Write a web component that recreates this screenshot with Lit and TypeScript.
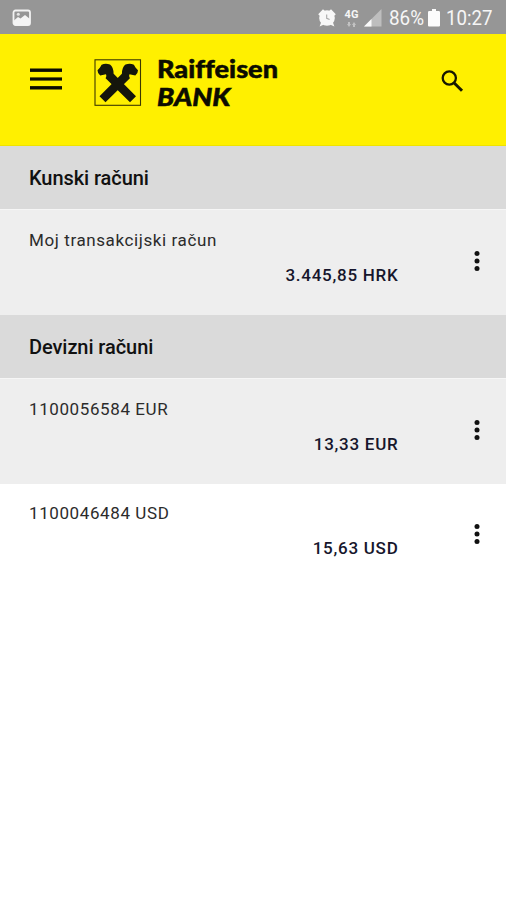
import { LitElement, html, css, svg } from "lit";
import { customElement, property } from "lit/decorators.js";

interface Account {
  name: string;
  amount: string;
}

interface Section {
  title: string;
  accounts: Account[];
}

const SECTIONS: Section[] = [
  { title: "Kunski računi", accounts: [{ name: "Moj transakcijski račun", amount: "3.445,85 HRK" }] },
  {
    title: "Devizni računi",
    accounts: [
      { name: "1100056584 EUR", amount: "13,33 EUR" },
      { name: "1100046484 USD", amount: "15,63 USD" },
    ],
  },
];

@customElement("status-bar")
class StatusBar extends LitElement {
  static styles = css`
    :host {
      display: flex;
      align-items: center;
      height: 34px;
      box-sizing: border-box;
      padding: 2px 13px 0 12px;
      background: #969696;
      color: #f6f6f6;
      font: 20px/32px Roboto, sans-serif;
      white-space: nowrap;
    }
    svg { display: block; flex: none; }
    .picture { margin-right: auto; }
    .net {
      display: flex;
      flex-direction: column;
      align-items: center;
      width: 15px;
      margin: 0 5px 0 8px;
      font: 700 11px/10px Roboto, sans-serif;
    }
    .arrows { margin-top: 2px; }
    .percent { width: 35px; margin: 0 4px 0 7px; }
    .time { width: 47px; margin-left: 6px; }
    .label { display: block; overflow: visible; }
  `;
  render() {
    return html`
      <svg class="picture" width="19" height="18" viewBox="0 0 19 18">
        <rect x="1.5" y="1.5" width="16.5" height="14.5" rx="2" fill="#969696" stroke="#f2f2f2" stroke-width="1.8" />
        <path d="M2 11.5L6 8 8.5 9.5 13 6 18 10V16H2Z" fill="#f4f4f4" />
        <circle cx="6.3" cy="5.3" r="1.5" fill="#e4e4e4" />
      </svg>
      <svg width="18" height="20" viewBox="0 0 18 20" fill="#f8f8f8">
        <circle cx="9" cy="10" r="7.8" />
        <path d="M.2 6.2L5 1.2 7.4 3.5 2.3 8.2ZM17.8 6.2L13 1.2 10.6 3.5 15.7 8.2ZM1.6 18.6L3.6 13 7.2 16ZM16.4 18.6L14.4 13 10.8 16Z" />
        <path d="M8.7 6.6V10.3L11.6 11.6" fill="none" stroke="#a8a8a8" stroke-width="1.1" />
      </svg>
      <div class="net">
        <span>4G</span>
        <svg class="arrows" width="9" height="5" viewBox="0 0 9 5" fill="#c2c2c2">
          <path d="M1 0H3V2H4L2 5 0 2H1ZM6 5H8V3H9L7 0 5 3H6Z" />
        </svg>
      </div>
      <svg width="18" height="18" viewBox="0 0 18 18">
        <path d="M0 17.5L17.5 0V17.5Z" fill="#bebebe" />
        <path d="M0 17.5L7.5 10V17.5Z" fill="#fafafa" />
      </svg>
      <svg class="label percent" width="35" height="20" fill="currentColor">
        <text x="0" y="17.4" textLength="35" lengthAdjust="spacingAndGlyphs">86%</text>
      </svg>
      <svg width="12" height="18" viewBox="0 0 12 18" fill="#fcfcfc">
        <path d="M4 0H8V2H10.8Q12 2 12 3.2V16.6Q12 17.6 11 17.6H1Q0 17.6 0 16.6V3.2Q0 2 1.2 2H4Z" />
      </svg>
      <svg class="label time" width="47" height="20" fill="currentColor">
        <text x="0" y="17.4" textLength="46.5" lengthAdjust="spacingAndGlyphs">10:27</text>
      </svg>
    `;
  }
}

@customElement("bank-header")
class BankHeader extends LitElement {
  static styles = css`
    :host {
      display: flex;
      align-items: flex-start;
      height: 112px;
      box-sizing: border-box;
      padding: 24px 42px 0 30px;
      background: #fff000;
      border-bottom: 1px solid #efe300;
    }
    svg { display: block; flex: none; }
    .menu { margin-top: 10px; }
    .emblem { margin-left: 32px; }
    .wordmark {
      margin-left: 13px;
      margin-right: auto;
      overflow: visible;
      font-family: "Lato", sans-serif;
      font-weight: 900;
      font-size: 24px;
      font-variant-ligatures: none;
      stroke: #0c0c00;
      stroke-width: 0.5;
    }
    .bank { font-style: italic; }
    .search { margin-top: 11px; }
  `;
  render() {
    return html`
      <svg class="menu" width="32" height="23" viewBox="0 0 32 23" fill="#0c0c00">
        <rect y="0.5" width="32" height="3.4" /><rect y="9.4" width="32" height="3.2" /><rect y="18.1" width="32" height="3.4" />
      </svg>
      <svg class="emblem" width="48" height="50" viewBox="0 0 48 50">
        <rect x="1" y="1.8" width="45.5" height="45.5" fill="none" stroke="#3c3900" stroke-width="1.1" />
        ${this.horse(false)}${this.horse(true)}
      </svg>
      <svg class="wordmark" width="130" height="56" fill="#0c0c00">
        <text x="2" y="20" textLength="121" lengthAdjust="spacingAndGlyphs">Raiffeisen</text>
        <text class="bank" x="2" y="47.8" textLength="73.5" lengthAdjust="spacingAndGlyphs">BANK</text>
      </svg>
      <svg class="search" width="23" height="24" viewBox="0 0 23 24" fill="none" stroke="#171700">
        <circle cx="8.3" cy="9" r="6.6" stroke-width="2.3" />
        <path d="M13.2 14L21 21.7" stroke-width="3" />
      </svg>
    `;
  }
  private horse(mirrored: boolean) {
    return svg`<path fill="#15160c" transform=${mirrored ? "translate(47.5 0) scale(-1 1)" : ""}
      d="M3.5 12.2L6 9.5 7.6 6.8Q11.5 4.8 16 6.6Q19.4 9 19.6 15.8L42 38.2 36 44.2 11.6 20.3Q13 17.8 12 16.2L6.2 17.4Q3.6 15.8 3.5 12.2Z" />`;
  }
}

@customElement("account-row")
class AccountRow extends LitElement {
  @property() name = "";
  @property() amount = "";
  static styles = css`
    :host {
      display: grid;
      grid-template-columns: 369px 1fr;
      height: 104px;
      box-sizing: border-box;
      padding: 19px 24px 0 29px;
      font: 17px/20px Roboto, sans-serif;
    }
    .info { display: flex; flex-direction: column; gap: 15px; }
    .name { color: #2b2b2b; letter-spacing: 0.6px; }
    .amount { align-self: flex-end; color: #16162c; font-weight: 500; letter-spacing: 0.74px; margin-right: -0.5px; }
    .more { justify-self: end; margin-top: 20px; }
  `;
  render() {
    return html`
      <div class="info">
        <span class="name">${this.name}</span>
        <span class="amount">${this.amount}</span>
      </div>
      <svg class="more" width="10" height="22" viewBox="0 0 10 22" fill="#111">
        <circle cx="5" cy="3.4" r="2.5" /><circle cx="5" cy="11" r="2.5" /><circle cx="5" cy="18.6" r="2.5" />
      </svg>
    `;
  }
}

@customElement("app-root")
class AppRoot extends LitElement {
  static styles = css`
    :host { display: flex; flex-direction: column; min-height: 900px; background: #fff; }
    .title {
      height: 64px;
      box-sizing: border-box;
      margin: 0;
      padding-left: 29px;
      background: #dadada;
      border-bottom: 1px solid #f6f6f6;
      color: #111;
      font: 500 20px/65px Roboto, sans-serif;
      letter-spacing: -0.07px;
    }
    .first { background: #eee; height: 105px; padding-top: 20px; }
  `;
  render() {
    return html`
      <status-bar></status-bar>
      <bank-header></bank-header>
      ${SECTIONS.map(
        (s) => html`
          <h2 class="title">${s.title}</h2>
          ${s.accounts.map(
            (a, i) => html`<account-row class=${i === 0 ? "first" : ""} .name=${a.name} .amount=${a.amount}></account-row>`
          )}
        `
      )}
    `;
  }
}
